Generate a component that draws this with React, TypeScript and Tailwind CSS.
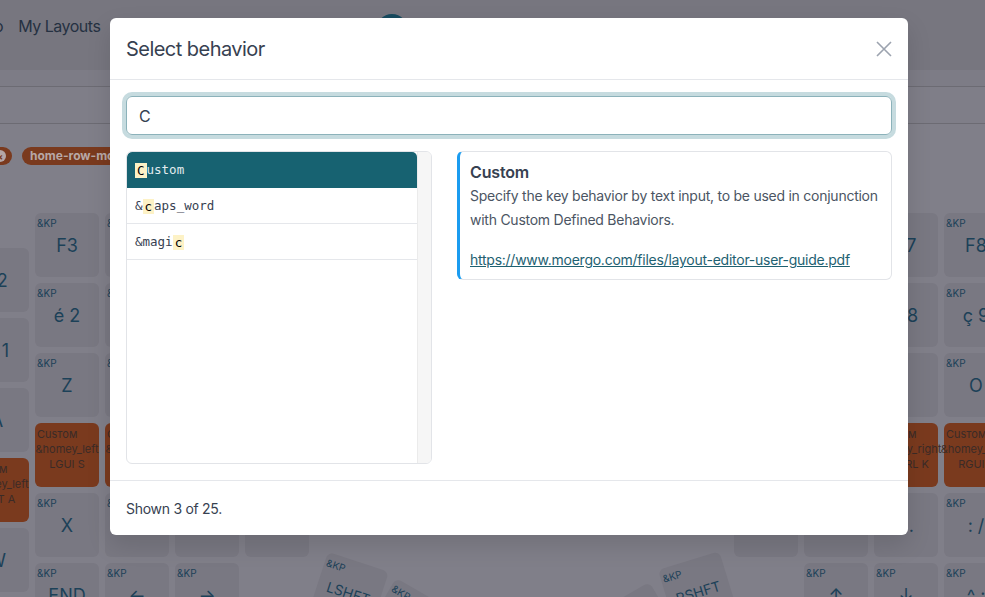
import React from "react";

type KeyDef =
  | { kind: "kp"; label: string }
  | { kind: "custom"; beh: string; label: string }
  | { kind: "blank" };

const kp = (label: string): KeyDef => ({ kind: "kp", label });
const cu = (beh: string, label: string): KeyDef => ({ kind: "custom", beh, label });

function Key({ k, small }: { k: KeyDef; small?: boolean }) {
  if (k.kind === "custom") {
    return (
      <div className="w-16 h-16 shrink-0 rounded-md bg-[#7a3a1e] flex flex-col items-center pt-[4px] text-[11px] leading-[15px] text-[#3a2b27] whitespace-nowrap">
        <div className="self-start pl-[2px] [font-variant:small-caps]">Custom</div>
        <div>{k.beh}</div>
        <div>{k.label}</div>
      </div>
    );
  }
  return (
    <div
      className={`relative w-16 h-16 shrink-0 rounded-md bg-[#797882] flex items-center justify-center text-[#1c4158] whitespace-nowrap ${
        small ? "text-[14px]" : "text-[18px]"
      }`}
    >
      {k.kind === "kp" && (
        <span className="absolute top-[4px] left-[2px] text-[10px] leading-[12px]">&amp;KP</span>
      )}
      {k.kind === "kp" && <span>{k.label}</span>}
    </div>
  );
}

function Column({ keys, offset }: { keys: KeyDef[]; offset: string }) {
  return (
    <div className={`flex flex-col gap-[6px] shrink-0 ${offset}`}>
      {keys.map((k, i) => (
        <Key key={i} k={k} />
      ))}
    </div>
  );
}

function Mark({ children }: { children: React.ReactNode }) {
  return (
    <span className="inline-block bg-[#fdf2c6] text-black px-[2px] leading-[15px]">{children}</span>
  );
}

export default function App() {
  const leftCols: { keys: KeyDef[]; offset: string }[] = [
    { keys: [kp("F2"), kp("& 1"), kp("A"), cu("&homey_left", "LALT A"), kp("W")], offset: "mt-[35px]" },
    { keys: [kp("F3"), kp("é 2"), kp("Z"), cu("&homey_left", "LGUI S"), kp("X"), kp("END")], offset: "mt-0" },
    { keys: [kp("F4"), kp("\" 3"), kp("E"), cu("&homey_left", "LALT D"), kp("C"), kp("←")], offset: "mt-0" },
    { keys: [kp("F5"), kp("' 4"), kp("R"), cu("&homey_left", "LCTRL F"), kp("V"), kp("→")], offset: "mt-0" },
    { keys: [{ kind: "blank" }, kp("( 5"), kp("T"), kp("G"), kp("B")], offset: "mt-0" },
  ];
  const rightCols: { keys: KeyDef[]; offset: string }[] = [
    { keys: [{ kind: "blank" }, kp("- 6"), kp("Y"), kp("H"), kp("N")], offset: "mt-0" },
    { keys: [kp("F6"), kp("è 7"), kp("U"), cu("&homey_right", "RSHFT J"), kp("? ,"), kp("↑")], offset: "mt-0" },
    { keys: [kp("F7"), kp("_ 8"), kp("I"), cu("&homey_right", "RCTRL K"), kp("; ."), kp("↓")], offset: "mt-0" },
    { keys: [kp("F8"), kp("ç 9"), kp("O"), cu("&homey_right", "RGUI L"), kp(": /"), kp("^ :")], offset: "mt-0" },
  ];

  return (
    <div className="relative w-[985px] h-[597px] overflow-hidden bg-[#807f89] font-['Inter',sans-serif]">
      {/* top nav */}
      <div className="h-[70px] bg-[#77767f] flex items-start pt-[14px] text-[16px] leading-[24px] text-[#253142] tracking-[-0.03em]">
        <span className="-ml-[6px]">o</span>
        <span className="ml-[15px]">My Layouts</span>
        <div className="ml-[276px] w-8 h-8 rounded-full bg-[#174a5e]" />
      </div>
      <div className="h-[17px] bg-[#7d7c86] border-b border-[#6c6b73]" />
      <div className="h-[37px] bg-[#7f7e88] border-b border-[#6c6b73]" />

      {/* tags */}
      <div className="mt-[23px] flex gap-[10px] h-[18px]">
        <div className="-ml-[48px] w-[60px] h-[18px] rounded-full bg-[#7a3a1e] flex items-center justify-end pr-[6px]">
          <span className="w-[12px] h-[12px] rounded-full bg-[#b4a6a5] flex items-center justify-center text-[9px] leading-none text-[#7a3a1e] font-bold">×</span>
        </div>
        <div className="h-[18px] rounded-full bg-[#7a3a1e] flex items-center px-2 text-[12px] font-bold text-[#b7a8a6]">
          home-row-mods
        </div>
      </div>

      {/* keyboard */}
      <div className="mt-[48px] flex">
        <div className="-ml-[35px] flex gap-[6px]">
          {leftCols.map((c, i) => (
            <Column key={i} keys={c.keys} offset={c.offset} />
          ))}
        </div>
        <div className="ml-[425px] flex gap-[6px]">
          {rightCols.map((c, i) => (
            <Column key={i} keys={c.keys} offset={c.offset} />
          ))}
        </div>
      </div>

      {/* thumb keys (rotated on the keyboard canvas) */}
      <div className="absolute left-[328px] top-[552px] origin-top-left rotate-[18deg]">
        <Key k={kp("LSHFT")} small />
      </div>
      <div className="absolute left-[396px] top-[578px] origin-top-left rotate-[30deg]">
        <Key k={kp("LCTRL")} small />
      </div>
      <div className="absolute left-[658px] top-[570px] origin-top-left -rotate-[17deg]">
        <Key k={kp("RSHFT")} small />
      </div>
      <div className="absolute left-[594px] top-[614px] origin-top-left -rotate-[30deg]">
        <Key k={kp("RCTRL")} small />
      </div>

      {/* modal */}
      <div className="absolute left-[110px] top-[18px] w-[798px] h-[517px] bg-white rounded-md shadow-[0_10px_25px_rgba(0,0,0,0.12)] flex flex-col">
        <div className="h-[62px] shrink-0 px-4 flex items-center justify-between border-b border-[#e5e7eb]">
          <h2 className="text-[20px] leading-[28px] text-[#374151] tracking-[-0.027em] mt-[1px]">Select behavior</h2>
          <svg width="16" height="16" viewBox="0 0 16 16" className="text-[#9ca3af]">
            <path d="M1 1 L15 15 M15 1 L1 15" stroke="currentColor" strokeWidth="1.6" fill="none" />
          </svg>
        </div>
        <div className="p-4 flex flex-col gap-4">
          <div className="h-[39px] rounded-md border border-[#8cb2ba] ring-4 ring-[#c6dbdf] flex items-center px-3 text-[16px] text-[#374151]">
            C
          </div>
          <div className="flex h-[313px] items-start">
            <div className="w-[306px] h-[313px] shrink-0 rounded-md border border-[#e2e4e8] flex overflow-hidden">
              <div className="flex-1 flex flex-col font-['DejaVu_Sans_Mono',monospace] text-[12.5px] text-[#374151]">
                <div className="h-[36px] flex items-center px-[8px] bg-[#176271] text-[#e3ecef] rounded-tl-[5px] rounded-tr-[5px]">
                  <Mark>C</Mark>
                  <span>ustom</span>
                </div>
                <div className="h-[36px] flex items-center px-[8px] border-b border-[#e5e7eb] pt-[1px]">
                  <span>&amp;</span>
                  <Mark>c</Mark>
                  <span>aps_word</span>
                </div>
                <div className="h-[36px] flex items-center px-[8px] border-b border-[#e5e7eb] pt-[1px]">
                  <span>&amp;magi</span>
                  <Mark>c</Mark>
                </div>
              </div>
              <div className="w-[14px] shrink-0 bg-[#f6f6f6] border-l border-[#ebebeb]" />
            </div>
            <div className="ml-[25px] flex-1 rounded-md border border-[#e2e4e8] border-l-[3px] border-l-[#1b9cf0] pl-[10px] pr-[2px] pt-[8px] pb-[7px]">
              <div className="text-[16px] leading-[24px] font-semibold text-[#374151] tracking-[-0.01em]">Custom</div>
              <p className="text-[14px] leading-[24px] text-[#4b5563] tracking-[-0.018em]">
                Specify the key behavior by text input, to be used in conjunction with Custom Defined Behaviors.
              </p>
              <p className="mt-4 text-[14px] leading-[24px] tracking-[-0.018em]">
                <a className="text-[#1e6171] underline">https://www.moergo.com/files/layout-editor-user-guide.pdf</a>
              </p>
            </div>
          </div>
        </div>
        <div className="flex-1 border-t border-[#e5e7eb] px-4 flex items-center text-[14px] text-[#374151] tracking-[-0.02em]">
          Shown 3 of 25.
        </div>
      </div>
    </div>
  );
}
